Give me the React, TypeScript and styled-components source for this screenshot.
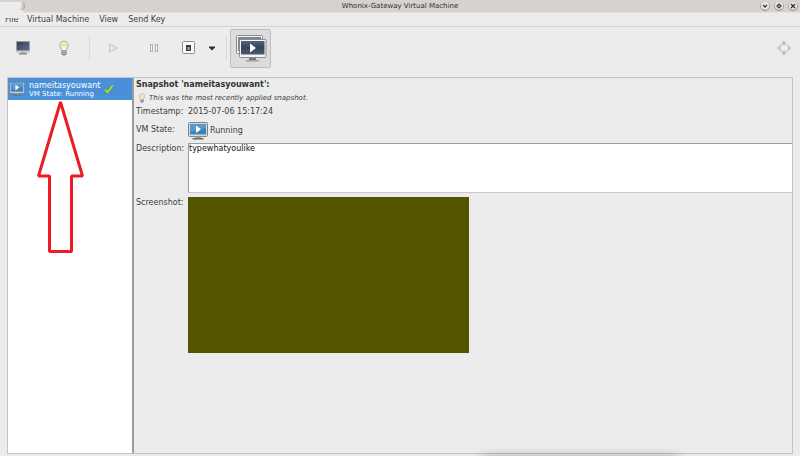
import React from "react";
import styled, { createGlobalStyle } from "styled-components";

const Global = createGlobalStyle`
  * { box-sizing: border-box; }
  html, body, #root { height: 100%; }
  body { margin: 0; background: #ececec; overflow: hidden; }
  body, button, textarea { font-family: "DejaVu Sans", Verdana, sans-serif; font-size: 8px; line-height: 10px; color: #3a3e40; }
  button { border: 0; padding: 0; background: none; }
  svg { display: block; }
`;

const Window = styled.div`
  display: flex;
  flex-direction: column;
  height: 100%;
  position: relative;
`;

const TitleBar = styled.header`
  flex: none;
  display: grid;
  grid-template-columns: 1fr auto 1fr;
  align-items: center;
  height: 13px;
  background: #d6d2ce;
  border-bottom: 1px solid #e4e1de;
`;

const Title = styled.h1`
  grid-column: 2;
  margin: 0;
  font-size: 7px;
  line-height: 12px;
  font-weight: 400;
  color: #2e2e2e;
`;

const WindowButtons = styled.div`
  display: flex;
  justify-content: flex-end;
  gap: 4px;
  padding-right: 2px;
`;

const WindowButton = styled.button`
  width: 10px;
  height: 10px;
`;

const CornerTab = styled.div`
  position: absolute;
  left: 0;
  top: 2px;
  width: 23px;
  height: 16px;
  background: #ececec;
`;

const TabKnob = styled.div`
  position: absolute;
  left: 20px;
  top: 2px;
  width: 5px;
  height: 8px;
  border-radius: 0 4px 4px 0;
  background: linear-gradient(90deg, #f2f1f0, #c0bcb8);
  border-right: 1px solid #aaa6a2;
  border-bottom: 1px solid #b8b4b0;
`;

const MenuBar = styled.nav`
  flex: none;
  display: flex;
  align-items: center;
  gap: 10px;
  height: 14px;
  padding-left: 5px;
  border-bottom: 1px solid #d2d2d2;
`;

const MenuItem = styled.button<{ $width?: number }>`
  text-align: left;
  white-space: nowrap;
  line-height: 12px;
  width: ${(p) => (p.$width ? `${p.$width}px` : "auto")};
`;

const ToolBar = styled.div`
  flex: none;
  display: flex;
  align-items: center;
  height: 50px;
  padding: 0 8px 8px 15px;
`;

const ToolButton = styled.button<{ $before?: number }>`
  margin-left: ${(p) => p.$before ?? 0}px;
  width: 16px;
  height: 16px;
`;

const ViewButton = styled.button`
  display: grid;
  place-items: center;
  width: 41px;
  height: 39px;
  background: #dcdcdc;
  border: 1px solid #bebebe;
  border-radius: 2px;
  margin-left: 3px;
`;

const Separator = styled.span<{ $before: number }>`
  width: 1px;
  height: 24px;
  background: #d9d9d9;
  margin-left: ${(p) => p.$before}px;
`;

const Spacer = styled.span`
  flex: 1;
`;

const Panel = styled.main`
  flex: 1;
  min-height: 0;
  display: flex;
  margin: 0 7px 2px;
  border: 1px solid #c4c4c4;
`;

const Sidebar = styled.aside`
  flex: none;
  position: relative;
  width: 126px;
  background: #fff;
  border-right: 2px solid #9c9c9c;
`;

const SnapshotButton = styled.button`
  display: flex;
  align-items: center;
  width: 100%;
  height: 22px;
  padding-left: 1px;
  background: #4a90d9;
  color: #fff;
  text-align: left;
`;

const SnapshotLabel = styled.span`
  display: flex;
  flex-direction: column;
  margin: 0 4px;
`;

const SnapshotName = styled.span`
  font-size: 8px;
  line-height: 9px;
`;

const SnapshotState = styled.span`
  font-size: 7px;
  line-height: 8px;
`;

const Pointer = styled.svg`
  position: absolute;
  left: 28px;
  top: 20px;
`;

const Details = styled.section`
  flex: 1;
  min-width: 0;
  padding: 1px 0 0 2px;
`;

const Heading = styled.h2`
  margin: 0;
  font-size: 8px;
  line-height: 12px;
  color: #2e3234;
`;

const Note = styled.p`
  display: flex;
  align-items: center;
  gap: 2px;
  height: 13px;
  margin: 0;
  padding-left: 1px;
  font-size: 7px;
  font-style: italic;
`;

const Fields = styled.div`
  display: grid;
  grid-template-columns: 48px minmax(0, 1fr);
  column-gap: 4px;
`;

const Label = styled.label<{ $top: number }>`
  padding-top: ${(p) => p.$top}px;
`;

const Value = styled.div<{ $height: number }>`
  display: flex;
  align-items: center;
  gap: 2px;
  height: ${(p) => p.$height}px;
`;

const Description = styled.textarea`
  display: block;
  width: 100%;
  height: 50px;
  margin: 0 0 4px;
  padding: 0;
  border: 1px solid #9c9c9c;
  border-right: 0;
  border-bottom-color: #c8c8c8;
  border-radius: 0;
  background: #fff;
  color: #111;
  resize: none;
  outline: 0;
`;

const Screenshot = styled.div`
  width: 100%;
  max-width: 281px;
  height: 156px;
  background: #555500;
`;

const BottomShadow = styled.div`
  position: absolute;
  left: 59%;
  right: 14%;
  bottom: 0;
  height: 8px;
  background: linear-gradient(transparent, rgba(0, 0, 0, 0.13));
  mask-image: linear-gradient(90deg, transparent, #000 9%, #000 91%, transparent);
`;

function WinIcon({ kind }: { kind: "down" | "max" | "close" }) {
  return (
    <svg width="10" height="10" viewBox="0 0 10 10">
      <circle cx="5" cy="5.2" r="4.8" fill="#96928e" />
      <circle cx="5" cy="4.7" r="4.1" fill="#e9e7e5" />
      {kind === "down" && <path d="M3 4 5 6 7 4" fill="none" stroke="#333" strokeWidth="1.3" />}
      {kind === "max" && <path d="M5 3 7 5 5 7 3 5Z" fill="none" stroke="#333" strokeWidth="1.2" />}
      {kind === "close" && <path d="m3 3 4 4m0-4L3 7" stroke="#333" strokeWidth="1.3" />}
    </svg>
  );
}

function Monitor() {
  return (
    <svg width="16" height="16" viewBox="0 0 16 16">
      <defs>
        <linearGradient id="dark" x2="1" y2="1">
          <stop stopColor="#303f55" />
          <stop offset="1" stopColor="#65758c" />
        </linearGradient>
      </defs>
      <rect x="1.5" y="1.5" width="13" height="10" fill="url(#dark)" stroke="#a0a09c" />
      <path d="M1 10.500h14v2H1z" fill="#c8c8c4" />
      <path d="M6 12.500h4v1H6z" fill="#777" />
      <path d="M4 13h8v1.500H4z" fill="#8c8c8a" />
    </svg>
  );
}

function PlayMonitor({ size }: { size: number }) {
  return (
    <svg width={size} height={size - 2} viewBox="0 0 20 18">
      <rect x=".6" y=".6" width="18.8" height="13.8" rx="1" fill="#e2e2df" stroke="#777977" />
      <rect x="2" y="2" width="16" height="10.5" fill="#3a83c2" />
      <path d="M2 2h16v4L2 10z" fill="#5798cd" />
      <path d="m8 3.5 5 3.7-5 3.8z" fill="#fff" />
      <path d="M7 14.5h6V16H7z" fill="#9a9c9a" />
      <path d="M4.5 16h11v1.6h-11z" fill="#70726f" />
    </svg>
  );
}

function Bulb({ size }: { size: number }) {
  return (
    <svg width={size} height={size} viewBox="0 0 16 16">
      <path
        d="M8 1C5.2 1 3.5 3 3.5 5.2c0 2 1.7 3.1 2.2 5.3h4.6c.5-2.2 2.2-3.3 2.2-5.3C12.5 3 10.8 1 8 1Z"
        fill="#e4e4da"
        stroke="#acaca4"
        strokeWidth=".9"
      />
      <circle cx="8" cy="5.5" r="2.5" fill="#f0e48c" />
      <path d="M6.8 6.5 8 5.5l1.2 1V10H6.8Z" fill="#fff" opacity=".7" />
      <path d="M5.3 10.500h5.400v3.500L9 15.500H7L5.300 14Z" fill="#858780" />
      <path d="M6 11.500h4M6 13.300h4" stroke="#d9d9d4" strokeWidth=".7" />
    </svg>
  );
}

function Run() {
  return (
    <svg width="16" height="16" viewBox="0 0 16 16">
      <path d="M4.500 4 12 8.200l-7.500 4Z" fill="#e9e9e9" stroke="#c2c2c2" />
    </svg>
  );
}

function Pause() {
  return (
    <svg width="16" height="16" viewBox="0 0 16 16" fill="#f0f0f0" stroke="#b0b0b0">
      <rect x="4.5" y="4.5" width="2" height="7" />
      <rect x="9.5" y="4.5" width="2" height="7" />
    </svg>
  );
}

function Power() {
  return (
    <svg width="16" height="16" viewBox="0 0 16 16">
      <rect x="2.5" y="1.5" width="12" height="12" rx="1" fill="#fafafa" stroke="#8e8e8c" />
      <rect x="6" y="5" width="5" height="6" fill="#3b3b3b" />
      <rect x="7.5" y="7" width="2" height="3" fill="#aaa" />
    </svg>
  );
}

function Snapshots() {
  return (
    <svg width="32" height="28" viewBox="0 0 32 28">
      <defs>
        <linearGradient id="screen" x2="0" y2="1">
          <stop stopColor="#53647a" />
          <stop offset=".5" stopColor="#33445b" />
          <stop offset="1" stopColor="#4b5c72" />
        </linearGradient>
      </defs>
      <rect x="1.5" y="1.5" width="26" height="18" rx="1" fill="#f2f2f0" stroke="#8c8e8b" />
      <rect x="3" y="3" width="23" height="14" fill="#76869b" />
      <rect x="4.5" y="5.5" width="26.5" height="18" rx="1" fill="#f4f4f2" stroke="#8c8e8b" />
      <rect x="6" y="7" width="23.5" height="13.5" fill="url(#screen)" />
      <path d="M15 9.500 21 14l-6 4.500Z" fill="#fff" />
      <path d="M14 24h7v2h-7z" fill="#777" />
      <path d="M11 26h13v1.500H11z" fill="#a0a09e" />
    </svg>
  );
}

function Fullscreen() {
  return (
    <svg width="16" height="16" viewBox="0 0 16 16">
      <rect x="4.5" y="5" width="7.5" height="6" fill="#f1f1ef" stroke="#c8c8c0" />
      <g fill="#a6bbd6">
        <path d="M8 1 10.500 3.500H5.500ZM8 15l2.500-2.500h-5Z" />
        <path d="M1 8l2.500-2.500v5ZM15 8l-2.500-2.500v5Z" />
        <circle cx="8" cy="3" r="1.6" />
        <circle cx="8" cy="13" r="1.6" />
      </g>
    </svg>
  );
}

export default function App() {
  return (
    <Window>
      <Global />
      <TitleBar>
        <Title>Whonix-Gateway Virtual Machine</Title>
        <WindowButtons>
          <WindowButton aria-label="Minimize"><WinIcon kind="down" /></WindowButton>
          <WindowButton aria-label="Maximize"><WinIcon kind="max" /></WindowButton>
          <WindowButton aria-label="Close"><WinIcon kind="close" /></WindowButton>
        </WindowButtons>
      </TitleBar>
      <MenuBar>
        <MenuItem $width={12}>File</MenuItem>
        <MenuItem>Virtual Machine</MenuItem>
        <MenuItem>View</MenuItem>
        <MenuItem>Send Key</MenuItem>
      </MenuBar>
      <ToolBar>
        <ToolButton aria-label="Console"><Monitor /></ToolButton>
        <ToolButton aria-label="Details" $before={25}><Bulb size={16} /></ToolButton>
        <Separator $before={17} />
        <ToolButton aria-label="Run" $before={15}><Run /></ToolButton>
        <ToolButton aria-label="Pause" $before={25}><Pause /></ToolButton>
        <ToolButton aria-label="Shut down" $before={18}><Power /></ToolButton>
        <ToolButton aria-label="Shut down options" $before={8}>
          <svg width="16" height="16" viewBox="0 0 16 16">
            <path d="M5 6.500h6v1L8 10.500 5 7.500Z" fill="#333" />
          </svg>
        </ToolButton>
        <Separator $before={6} />
        <ViewButton aria-label="Snapshots"><Snapshots /></ViewButton>
        <Spacer />
        <ToolButton aria-label="Fullscreen"><Fullscreen /></ToolButton>
      </ToolBar>
      <Panel>
        <Sidebar>
          <SnapshotButton>
            <PlayMonitor size={16} />
            <SnapshotLabel>
              <SnapshotName>nameitasyouwant</SnapshotName>
              <SnapshotState>VM State: Running</SnapshotState>
            </SnapshotLabel>
            <svg width="10" height="10" viewBox="0 0 10 10">
              <path d="m1 5.500 2.500 2.700L8.700 1.500" fill="none" stroke="#5f9a2a" strokeWidth="2.8" />
              <path d="m1 5.500 2.500 2.700L8.700 1.500" fill="none" stroke="#a5e05a" strokeWidth="1.6" />
            </svg>
          </SnapshotButton>
          <Pointer width="50" height="156" viewBox="0 0 50 156">
            <path
              d="M24.500 4 46.500 78H35.500V153.500H13.500V78H2.500Z"
              fill="none"
              stroke="#ed1c24"
              strokeWidth="3"
              strokeLinejoin="bevel"
            />
          </Pointer>
        </Sidebar>
        <Details>
          <Heading>Snapshot 'nameitasyouwant':</Heading>
          <Note><Bulb size={10} />This was the most recently applied snapshot.</Note>
          <Fields>
            <Label as="span" $top={3}>Timestamp:</Label>
            <Value $height={15}>2015-07-06 15:17:24</Value>
            <Label as="span" $top={6}>VM State:</Label>
            <Value $height={24}><PlayMonitor size={20} />Running</Value>
            <Label htmlFor="description" $top={1}>Description:</Label>
            <Description id="description" defaultValue="typewhatyoulike" spellCheck={false} />
            <Label as="span" $top={1}>Screenshot:</Label>
            <Screenshot role="img" aria-label="Screenshot" />
          </Fields>
        </Details>
      </Panel>
      <CornerTab />
      <TabKnob />
      <BottomShadow />
    </Window>
  );
}
